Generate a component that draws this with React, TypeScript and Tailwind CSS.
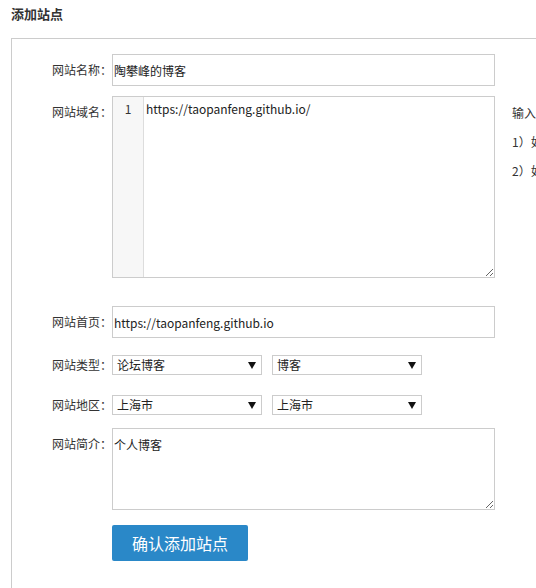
import React from "react";

const font = { fontFamily: '"Noto Sans CJK SC", "Noto Sans", sans-serif' };

function Arrow() {
  return (
    <svg width="8" height="7" viewBox="0 0 8 7" className="shrink-0">
      <path d="M0 0 L8 0 L4 7 Z" fill="#111" />
    </svg>
  );
}

function Select({ value }: { value: string }) {
  return (
    <div className="flex h-[20px] w-[150px] items-center justify-between border border-[#ccc] bg-white pl-[4px] pr-[5px] text-[12px] text-[#222]">
      <span>{value}</span>
      <Arrow />
    </div>
  );
}

function Label({ text, lh = "leading-[32px]" }: { text: string; lh?: string }) {
  return (
    <div className={`w-[100px] shrink-0 text-right text-[12px] text-[#333] ${lh}`}>{text}</div>
  );
}

export default function App() {
  return (
    <div className="h-[588px] w-[536px] overflow-hidden bg-white" style={font}>
      <div className="h-[38px] pl-[11px] pt-[5px] text-[13px] font-bold leading-[18px] text-[#333]">
        添加站点
      </div>
      <div className="ml-[11px] h-[560px] w-[700px] border-l border-t border-[#ccc] pt-[15px]">
        {/* row 1 */}
        <div className="flex">
          <Label text="网站名称：" />
          <input
            readOnly
            defaultValue="陶攀峰的博客"
            className="h-[32px] w-[383px] border border-[#ccc] px-[1px] text-[12px] text-[#222] outline-none"
          />
        </div>
        {/* row 2 */}
        <div className="mt-[10px] flex">
          <Label text="网站域名：" />
          <div className="flex h-[182px] w-[383px] border border-[#ccc]">
            <div className="w-[31px] shrink-0 border-r border-[#ddd] bg-[#f7f7f7] pt-[3px] text-center text-[12px] leading-[18px] text-[#333]">
              1
            </div>
            <textarea
              readOnly
              defaultValue="https://taopanfeng.github.io/"
              className="h-full flex-1 resize px-[2px] pt-[3px] text-[12px] leading-[18px] text-[#222] outline-none"
            />
          </div>
          <div className="ml-[17px] whitespace-nowrap pt-[2px] text-[12px] leading-[29px] text-[#333]">
            <div>输入站点域名，每行一个</div>
            <div>1）如果域名带有协议头</div>
            <div>2）如果域名不带协议头</div>
          </div>
        </div>
        {/* row 3 */}
        <div className="mt-[28px] flex">
          <Label text="网站首页：" />
          <input
            readOnly
            defaultValue="https://taopanfeng.github.io"
            className="h-[32px] w-[383px] border border-[#ccc] px-[1px] text-[12px] text-[#222] outline-none"
          />
        </div>
        {/* row 4 */}
        <div className="mt-[17px] flex items-center">
          <Label text="网站类型：" lh="leading-[20px]" />
          <div className="flex gap-[10px]">
            <Select value="论坛博客" />
            <Select value="博客" />
          </div>
        </div>
        {/* row 5 */}
        <div className="mt-[20px] flex items-center">
          <Label text="网站地区：" lh="leading-[20px]" />
          <div className="flex gap-[10px]">
            <Select value="上海市" />
            <Select value="上海市" />
          </div>
        </div>
        {/* row 6 */}
        <div className="mt-[13px] flex">
          <Label text="网站简介：" />
          <textarea
            readOnly
            defaultValue="个人博客"
            className="h-[82px] w-[383px] resize border border-[#ccc] px-[1px] pt-[7px] text-[12px] leading-[18px] text-[#222] outline-none"
          />
        </div>
        {/* button */}
        <div className="mt-[15px] flex">
          <div className="w-[100px] shrink-0" />
          <button className="h-[36px] w-[136px] rounded-[2px] bg-[#2a88c8] text-[16px] text-white">
            确认添加站点
          </button>
        </div>
      </div>
    </div>
  );
}
